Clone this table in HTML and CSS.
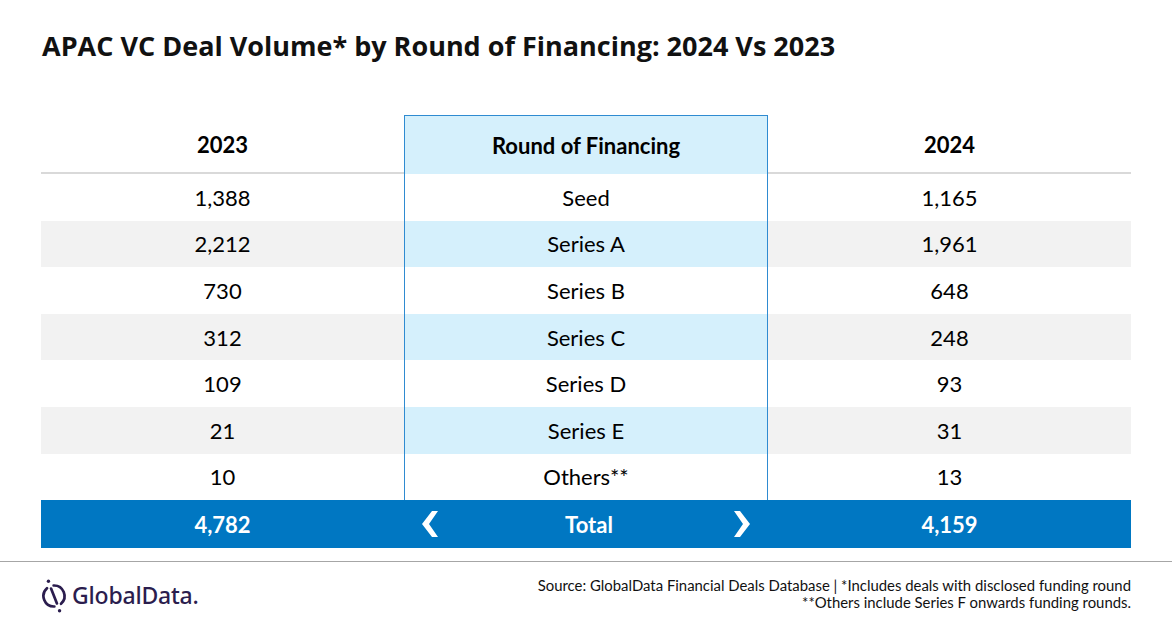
FILE: index.html
```html
<!DOCTYPE html>
<html>
<head>
<meta charset="utf-8">
<link rel="stylesheet" href="styles.css">
</head>
<body>
<div class="page">
  <h1 class="title">APAC VC Deal Volume* by Round of Financing: 2024 Vs 2023</h1>
  <div class="table">
    <div class="row head">
      <div class="cell side">2023</div>
      <div class="cell mid">Round of Financing</div>
      <div class="cell side">2024</div>
    </div>
    <div class="row"><div class="cell side">1,388</div><div class="cell mid">Seed</div><div class="cell side">1,165</div></div>
    <div class="row alt"><div class="cell side">2,212</div><div class="cell mid">Series A</div><div class="cell side">1,961</div></div>
    <div class="row"><div class="cell side">730</div><div class="cell mid">Series B</div><div class="cell side">648</div></div>
    <div class="row alt"><div class="cell side">312</div><div class="cell mid">Series C</div><div class="cell side">248</div></div>
    <div class="row"><div class="cell side">109</div><div class="cell mid">Series D</div><div class="cell side">93</div></div>
    <div class="row alt"><div class="cell side">21</div><div class="cell mid">Series E</div><div class="cell side">31</div></div>
    <div class="row"><div class="cell side">10</div><div class="cell mid">Others**</div><div class="cell side">13</div></div>
    <div class="row total">
      <div class="cell side">4,782</div>
      <div class="cell tmid">
        <svg class="chev" viewBox="0 0 16 26" width="16" height="26"><polygon points="10,0 16,0 7,13 16,26 10,26 0,13" fill="#fff"/></svg>
        <span>Total</span>
        <svg class="chev" viewBox="0 0 16 26" width="16" height="26"><polygon points="0,0 6,0 16,13 6,26 0,26 9,13" fill="#fff"/></svg>
      </div>
      <div class="cell side">4,159</div>
    </div>
  </div>
  <div class="footer">
    <div class="logo">
      <svg width="30" height="38" viewBox="0 0 30 38">
        <g fill="none" stroke="#2b1d4e" stroke-width="2.7" stroke-linecap="round">
          <path d="M6.97 12.2 A10.5 10.5 0 0 0 14.37 30.49"/>
          <path d="M13.63 9.51 A10.5 10.5 0 0 1 21.03 27.8"/>
          <line x1="11.04" y1="12.56" x2="16.96" y2="27.44"/>
        </g>
        <circle cx="8.45" cy="5.3" r="1.7" fill="#2b1d4e"/>
        <circle cx="19.55" cy="34.7" r="1.7" fill="#2b1d4e"/>
      </svg>
      <span class="logotext">GlobalData.</span>
    </div>
    <div class="source">
      <div>Source: GlobalData Financial Deals Database | *Includes deals with disclosed funding round</div>
      <div>**Others include Series F onwards funding rounds.</div>
    </div>
  </div>
</div>
</body>
</html>
```
FILE: styles.css
```css
* { box-sizing: border-box; }
html, body { margin: 0; padding: 0; background: #fff; }
body { font-family: Lato, "Open Sans", sans-serif; color: #000; }
.page { width: 1172px; height: 628px; overflow: hidden; }
.title {
  margin: 0;
  padding: 27px 0 0 42px;
  height: 115px;
  font-family: "Open Sans", Lato, sans-serif;
  font-size: 27px;
  font-weight: 700;
  color: #111;
  letter-spacing: 0;
}
.table { margin: 0 41px; width: 1090px; }
.row { display: flex; height: 46.6px; }
.cell {
  display: flex; align-items: center; justify-content: center;
  font-size: 22px;
}
.side { width: 363px; }
.mid {
  width: 364px;
  border-left: 1.5px solid #2f8bd1;
  border-right: 1.5px solid #2f8bd1;
}
.head { height: 59px; }
.head .cell { font-weight: 700; padding-top: 1px; }
.head .side { border-bottom: 2px solid #d9d9d9; height: 59px; }
.head .mid { background: #d5f0fc; border-top: 1.5px solid #2f8bd1; height: 59px; }
.alt .side { background: #f2f2f2; }
.alt .mid { background: #d5f0fc; }
.total { height: 48px; background: #0077c2; }
.total .cell { color: #fff; font-weight: 700; }
.tmid {
  width: 364px;
  justify-content: space-between;
  padding: 0 18px 0 18px;
}
.tmid span { margin-left: 6px; }
.chev { display: block; }
.footer {
  margin-top: 13px;
  border-top: 1.5px solid #a6a6a6;
  display: flex;
  justify-content: space-between;
  padding: 13px 41px 0 40px;
}
.logo { display: flex; align-items: center; gap: 2px; color: #2b1d4e; margin-top: 1px; }
.logotext { font-family: "Noto Sans", sans-serif; font-size: 23px; font-weight: 500; letter-spacing: -0.2px; }
.source { text-align: right; font-size: 14.9px; line-height: 17px; color: #111; padding-top: 2px; }
```
